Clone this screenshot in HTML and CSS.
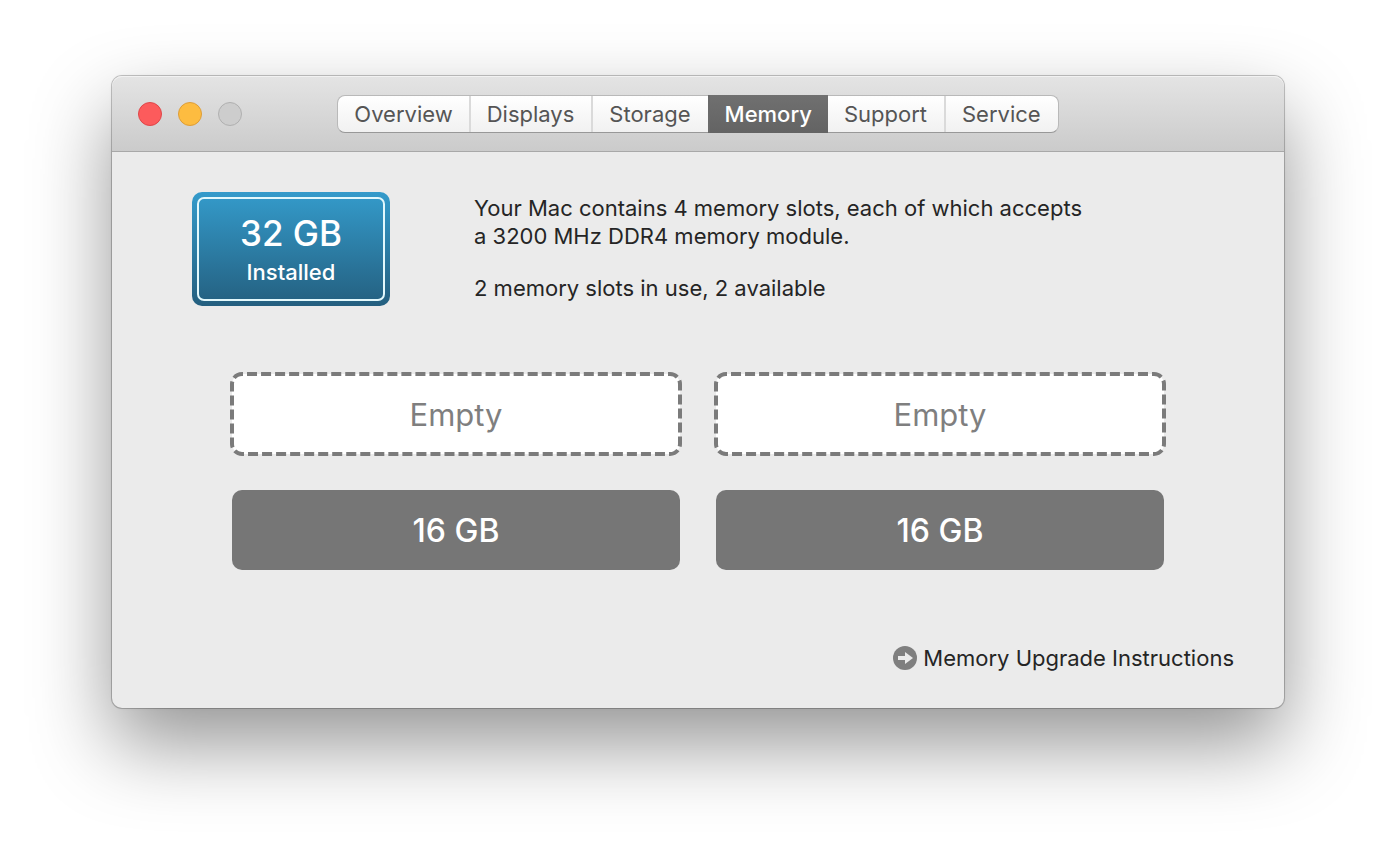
FILE: index.html
```html
<!DOCTYPE html>
<html lang="en">
<head>
<meta charset="utf-8">
<title>Memory</title>
<link rel="stylesheet" href="styles.css">
</head>
<body>
<main class="window">
  <header class="titlebar">
    <div class="controls">
      <button class="control close" type="button" aria-label="Close"></button>
      <button class="control minimize" type="button" aria-label="Minimize"></button>
      <button class="control zoom" type="button" aria-label="Zoom" disabled></button>
    </div>
    <nav class="tabs">
      <button class="tab" type="button">Overview</button>
      <button class="tab" type="button">Displays</button>
      <button class="tab" type="button">Storage</button>
      <button class="tab active" type="button" aria-current="page">Memory</button>
      <button class="tab" type="button">Support</button>
      <button class="tab" type="button">Service</button>
    </nav>
  </header>
  <div class="content">
    <section class="summary">
      <div class="badge">
        <div class="badge-inner">
          <span class="badge-size">32 GB</span>
          <span class="badge-label">Installed</span>
        </div>
      </div>
      <div class="description">
        <p>Your Mac contains 4 memory slots, each of which accepts<br>a 3200 MHz DDR4 memory module.</p>
        <p>2 memory slots in use, 2 available</p>
      </div>
    </section>
    <section class="slots">
      <div class="slot empty"><svg class="outline" aria-hidden="true"><rect width="100%" height="100%" rx="10" pathLength="1036"/></svg><span class="slot-label">Empty</span></div>
      <div class="slot empty"><svg class="outline" aria-hidden="true"><rect width="100%" height="100%" rx="10" pathLength="1036"/></svg><span class="slot-label">Empty</span></div>
      <div class="slot filled">16 GB</div>
      <div class="slot filled">16 GB</div>
    </section>
    <footer class="footer">
      <a class="upgrade" href="#">
        <svg class="arrow" viewBox="0 0 24 24" aria-hidden="true"><circle cx="12" cy="12" r="12" fill="#7f7f7f"/><path d="M5 10h7V6l8 6-8 6v-4H5z" fill="#ebebeb"/></svg>
        Memory Upgrade Instructions
      </a>
    </footer>
  </div>
</main>
</body>
</html>
```
FILE: styles.css
```css
* {
  box-sizing: border-box;
}

body {
  min-height: 100vh;
  margin: 0;
  padding: 76px 112px 40px;
  background: #fff;
  color: #252525;
  font: 22px/28px Inter, "Liberation Sans", sans-serif;
}

button {
  margin: 0;
  padding: 0;
  border: 0;
  font: inherit;
}

p {
  margin: 0;
}

.window {
  border-radius: 10px;
  background: #ebebeb;
  box-shadow: 0 0 0 1px rgba(0, 0, 0, 0.2), 0 0 3px rgba(0, 0, 0, 0.1), 0 36px 80px rgba(0, 0, 0, 0.42);
}

.titlebar {
  display: grid;
  grid-template-columns: 1fr auto 1fr;
  align-items: center;
  height: 76px;
  padding: 0 26px;
  border-bottom: 1px solid #a8a8a8;
  border-radius: 10px 10px 0 0;
  background: linear-gradient(#e4e4e4, #cbcbcb);
  box-shadow: inset 0 1px 0 #f2f2f2;
}

.controls {
  display: flex;
  gap: 16px;
}

.control {
  width: 24px;
  height: 24px;
  border: 1px solid;
  border-radius: 50%;
}

.close {
  border-color: #df4649;
  background: #fc5b5c;
}

.minimize {
  border-color: #dd9d38;
  background: #fdbc40;
}

.zoom {
  border-color: #b0b0b0;
  background: #cdcdcd;
}

.tabs {
  display: flex;
  height: 38px;
  border: 1px solid #b9b9b9;
  border-bottom-color: #989898;
  border-radius: 8px;
  background: linear-gradient(#fff, #f1f1f1);
}

.tab {
  padding: 0 16px;
  background: none;
  color: #555;
}

.tab + .tab {
  padding-right: 17px;
  border-left: 2px solid #dadada;
}

.tab.active {
  margin: -1px 0;
  border-left-color: #6a6a6a;
  background: linear-gradient(#707070, #636363);
  color: #fff;
  font-weight: 500;
}

.tab + .tab.active {
  padding: 0 16px 0 15px;
  border-left-color: #6a6a6a;
}

.tab.active + .tab {
  border-left: 0;
}

.content {
  padding: 40px 50px 36px 80px;
}

.summary {
  display: flex;
  gap: 84px;
}

.badge {
  flex: none;
  width: 198px;
  height: 114px;
  padding: 5px;
  border-radius: 10px;
  background: linear-gradient(#349bcb, #245f7f);
}

.badge-inner {
  display: flex;
  flex-direction: column;
  align-items: center;
  height: 100%;
  padding-top: 12px;
  border: 2px solid #e2f8fc;
  border-radius: 7px;
  color: #fff;
}

.badge-size {
  font-size: 35px;
  font-weight: 500;
  line-height: 44px;
}

.badge-label {
  margin-top: 3px;
  font-weight: 500;
  line-height: 28px;
}

.description {
  display: grid;
  align-content: start;
  gap: 24px;
  padding-top: 2px;
}

.slots {
  display: grid;
  grid-template-columns: 1fr 1fr;
  gap: 36px;
  margin: 68px 70px 0 40px;
}

.slot {
  position: relative;
  display: flex;
  align-items: center;
  justify-content: center;
  height: 80px;
  padding-top: 2px;
  border-radius: 10px;
  font-size: 32px;
}

.filled {
  background: #767676;
  color: #fff;
  font-weight: 500;
}

.empty {
  color: #7f7f7f;
  font-size: 31px;
}

.outline {
  position: absolute;
  inset: 0;
  width: 100%;
  height: 100%;
  overflow: visible;
  fill: #fff;
  stroke: #7b7b7b;
  stroke-width: 4;
  stroke-dasharray: 10 4;
  stroke-dashoffset: 9;
}

.slot-label {
  position: relative;
}

.footer {
  display: flex;
  justify-content: flex-end;
  margin-top: 74px;
}

.upgrade {
  display: flex;
  align-items: center;
  gap: 6px;
  color: inherit;
  text-decoration: none;
}

.arrow {
  width: 24px;
  height: 24px;
}
```
